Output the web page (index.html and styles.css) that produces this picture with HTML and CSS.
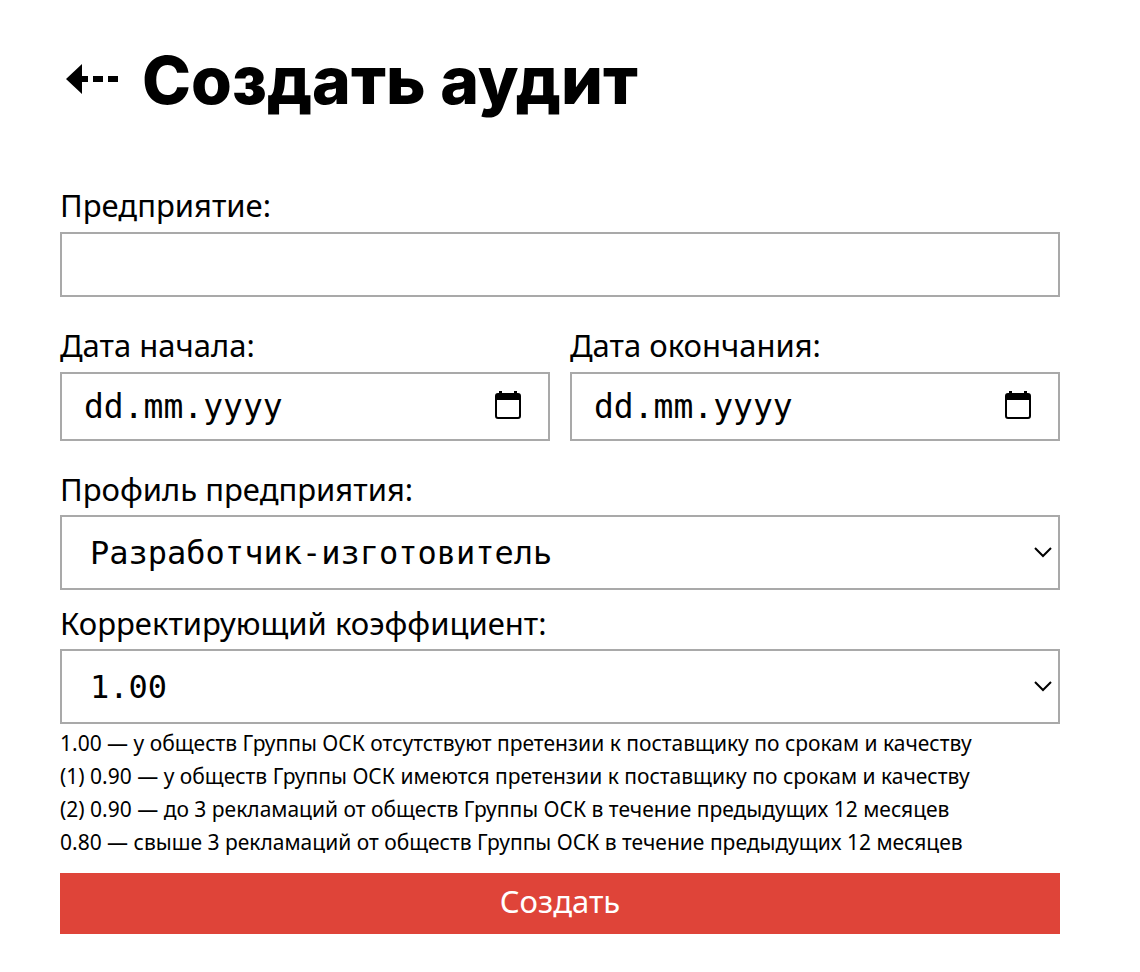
FILE: index.html
```html
<!DOCTYPE html>
<html lang="ru">
<head>
<meta charset="utf-8">
<meta name="viewport" content="width=device-width, initial-scale=1">
<title>Создать аудит</title>
<link rel="stylesheet" href="styles.css">
</head>
<body>
<main class="page">
  <header class="header">
    <a class="back" href="#" aria-label="Назад">
      <svg class="back-icon" viewBox="0 0 54 32" aria-hidden="true"><path d="M0 15 16 0v12h6v6h-6v12zM27 12h10v6H27zM42 12h10v6H42z"/></svg>
    </a>
    <h1 class="title">Создать аудит</h1>
  </header>
  <form class="form">
    <div class="field">
      <label class="label" for="company">Предприятие:</label>
      <input class="control control-text" id="company" type="text">
    </div>
    <div class="dates">
      <div class="field">
        <label class="label" for="start">Дата начала:</label>
        <div class="control control-date">
          <input class="date-input" id="start" type="text" placeholder="dd.mm.yyyy">
          <button class="picker" type="button" aria-label="Выбрать дату начала">
            <svg class="calendar-icon" viewBox="0 0 26 28" aria-hidden="true"><path fill-rule="evenodd" d="M4 0h3v2h12V0h3v2h1a3 3 0 0 1 3 3v20a3 3 0 0 1-3 3H3a3 3 0 0 1-3-3V5a3 3 0 0 1 3-3h1zM2 9v16a1 1 0 0 0 1 1h20a1 1 0 0 0 1-1V9z"/></svg>
          </button>
        </div>
      </div>
      <div class="field">
        <label class="label" for="end">Дата окончания:</label>
        <div class="control control-date">
          <input class="date-input" id="end" type="text" placeholder="dd.mm.yyyy">
          <button class="picker" type="button" aria-label="Выбрать дату окончания">
            <svg class="calendar-icon" viewBox="0 0 26 28" aria-hidden="true"><path fill-rule="evenodd" d="M4 0h3v2h12V0h3v2h1a3 3 0 0 1 3 3v20a3 3 0 0 1-3 3H3a3 3 0 0 1-3-3V5a3 3 0 0 1 3-3h1zM2 9v16a1 1 0 0 0 1 1h20a1 1 0 0 0 1-1V9z"/></svg>
          </button>
        </div>
      </div>
    </div>
    <div class="field field-select">
      <label class="label" for="profile">Профиль предприятия:</label>
      <select class="control control-select" id="profile">
        <option>Разработчик-изготовитель</option>
      </select>
    </div>
    <div class="field field-select">
      <label class="label" for="factor">Корректирующий коэффициент:</label>
      <select class="control control-select" id="factor">
        <option>1.00</option>
        <option>(1) 0.90</option>
        <option>(2) 0.90</option>
        <option>0.80</option>
      </select>
    </div>
    <div class="notes">
      <p class="note">1.00 — у обществ Группы ОСК отсутствуют претензии к поставщику по срокам и качеству</p>
      <p class="note">(1) 0.90 — у обществ Группы ОСК имеются претензии к поставщику по срокам и качеству</p>
      <p class="note">(2) 0.90 — до 3 рекламаций от обществ Группы ОСК в течение предыдущих 12 месяцев</p>
      <p class="note">0.80 — свыше 3 рекламаций от обществ Группы ОСК в течение предыдущих 12 месяцев</p>
    </div>
    <button class="submit" type="submit">Создать</button>
  </form>
</main>
</body>
</html>
```

FILE: styles.css
```css
*, *::before, *::after { box-sizing: border-box; }

body {
  margin: 0;
  background: #fff;
  color: #000;
  font-family: "Noto Sans", "Open Sans", sans-serif;
}

.page { padding: 40px 80px 38px 60px; }

.header {
  display: flex;
  align-items: center;
  gap: 22px;
  padding-left: 6px;
}

.back { display: flex; color: #000; }

.back-icon { width: 54px; height: 32px; fill: currentColor; }

.title {
  margin: 0;
  font: 800 66px/80px Inter, "Open Sans", sans-serif;
}

.form { display: flex; flex-direction: column; margin-top: 66px; }

.field { display: flex; flex-direction: column; min-width: 0; margin-bottom: 29px; }

.field-select { margin-bottom: 14px; }

.label { font-size: 31px; line-height: 38px; margin-bottom: 8px; }

.field-select .label { margin-bottom: 7px; }

.control {
  width: 100%;
  border: 2px solid #a9a9a9;
  border-radius: 0;
  background-color: #fff;
  color: #000;
  font: 32px/40px "DejaVu Sans Mono", monospace;
}

.control-text { height: 65px; padding: 0 22px; }

.dates { display: grid; grid-template-columns: 1fr 1fr; gap: 20px; }

.control-date {
  display: flex;
  align-items: center;
  height: 69px;
  padding: 0 27px 0 22px;
}

.date-input {
  flex: 1;
  min-width: 0;
  padding: 0;
  border: 0;
  outline: 0;
  background: none;
  color: #000;
  font: 33px/40px "DejaVu Sans Mono", monospace;
}

.date-input::placeholder { color: #000; opacity: 1; }

.picker { display: flex; padding: 0 0 4px; border: 0; background: none; color: #000; }

.calendar-icon { width: 26px; height: 28px; fill: currentColor; }

.control-select {
  height: 75px;
  padding: 0 40px 0 28px;
  appearance: none;
  background-image: url("data:image/svg+xml,%3Csvg xmlns='http://www.w3.org/2000/svg' viewBox='0 0 18 11'%3E%3Cpath d='M1 1l8 8 8-8' fill='none' stroke='%23000' stroke-width='2'/%3E%3C/svg%3E");
  background-repeat: no-repeat;
  background-position: right 6px center;
  background-size: 18px 11px;
}

.notes { margin-top: -11px; }

.note { margin: 0; font-size: 21px; line-height: 33px; }

.submit {
  margin-top: 14px;
  padding: 8px 10px 12px;
  border: 0;
  background: #df4439;
  color: #fff;
  font: 31px/41px "Noto Sans", "Open Sans", sans-serif;
}
```
